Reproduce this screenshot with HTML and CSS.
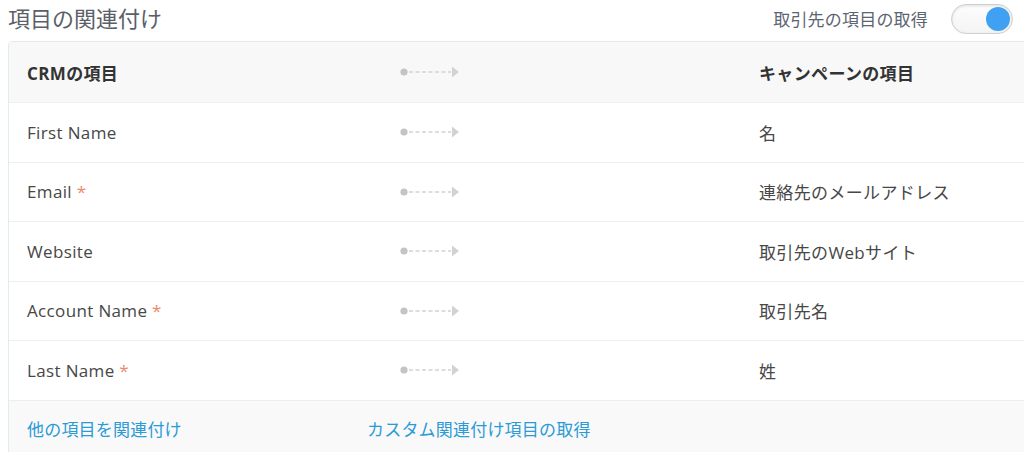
FILE: index.html
```html
<!DOCTYPE html>
<html lang="ja">
<head>
<meta charset="utf-8">
<link rel="stylesheet" href="styles.css">
</head>
<body>
<div class="page">
  <div class="topbar">
    <h1 class="title">項目の関連付け</h1>
    <div class="fetch">
      <span class="fetch-label">取引先の項目の取得</span>
      <span class="toggle"><span class="knob"></span></span>
    </div>
  </div>
  <div class="card">
    <div class="row head">
      <div class="cell">CRMの項目</div>
      <div class="cell arrow-cell"><svg class="arrow" width="62" height="14" viewBox="0 0 62 14"><circle cx="5" cy="7" r="3.6" fill="#c4c4c4"/><path d="M10 7H52" stroke="#d2d2d2" stroke-width="1.4" stroke-dasharray="4 2.5"/><path d="M53 1.5L60 7L53 12.5Z" fill="#d2d2d2"/></svg></div>
      <div class="cell">キャンペーンの項目</div>
    </div>
    <div class="row">
      <div class="cell">First Name</div>
      <div class="cell arrow-cell"><svg class="arrow" width="62" height="14" viewBox="0 0 62 14"><circle cx="5" cy="7" r="3.6" fill="#c4c4c4"/><path d="M10 7H52" stroke="#d2d2d2" stroke-width="1.4" stroke-dasharray="4 2.5"/><path d="M53 1.5L60 7L53 12.5Z" fill="#d2d2d2"/></svg></div>
      <div class="cell">名</div>
    </div>
    <div class="row">
      <div class="cell">Email <span class="req">*</span></div>
      <div class="cell arrow-cell"><svg class="arrow" width="62" height="14" viewBox="0 0 62 14"><circle cx="5" cy="7" r="3.6" fill="#c4c4c4"/><path d="M10 7H52" stroke="#d2d2d2" stroke-width="1.4" stroke-dasharray="4 2.5"/><path d="M53 1.5L60 7L53 12.5Z" fill="#d2d2d2"/></svg></div>
      <div class="cell">連絡先のメールアドレス</div>
    </div>
    <div class="row">
      <div class="cell">Website</div>
      <div class="cell arrow-cell"><svg class="arrow" width="62" height="14" viewBox="0 0 62 14"><circle cx="5" cy="7" r="3.6" fill="#c4c4c4"/><path d="M10 7H52" stroke="#d2d2d2" stroke-width="1.4" stroke-dasharray="4 2.5"/><path d="M53 1.5L60 7L53 12.5Z" fill="#d2d2d2"/></svg></div>
      <div class="cell">取引先のWebサイト</div>
    </div>
    <div class="row">
      <div class="cell">Account Name <span class="req">*</span></div>
      <div class="cell arrow-cell"><svg class="arrow" width="62" height="14" viewBox="0 0 62 14"><circle cx="5" cy="7" r="3.6" fill="#c4c4c4"/><path d="M10 7H52" stroke="#d2d2d2" stroke-width="1.4" stroke-dasharray="4 2.5"/><path d="M53 1.5L60 7L53 12.5Z" fill="#d2d2d2"/></svg></div>
      <div class="cell">取引先名</div>
    </div>
    <div class="row">
      <div class="cell">Last Name <span class="req">*</span></div>
      <div class="cell arrow-cell"><svg class="arrow" width="62" height="14" viewBox="0 0 62 14"><circle cx="5" cy="7" r="3.6" fill="#c4c4c4"/><path d="M10 7H52" stroke="#d2d2d2" stroke-width="1.4" stroke-dasharray="4 2.5"/><path d="M53 1.5L60 7L53 12.5Z" fill="#d2d2d2"/></svg></div>
      <div class="cell">姓</div>
    </div>
    <div class="footer">
      <a class="link" href="#">他の項目を関連付け</a>
      <a class="link" href="#">カスタム関連付け項目の取得</a>
    </div>
  </div>
</div>
</body>
</html>
```
FILE: styles.css
```css
html, body {
  margin: 0;
  padding: 0;
  background: #ffffff;
  overflow: hidden;
}
body {
  font-family: "Open Sans", "Noto Sans CJK JP", sans-serif;
  color: #474747;
  width: 1024px;
  height: 452px;
}
.page {
  padding-left: 8px;
}
.topbar {
  height: 41px;
  display: flex;
  align-items: center;
  justify-content: space-between;
  padding-right: 11px;
}
.title {
  margin: 0;
  font-family: "Noto Sans CJK JP", sans-serif;
  font-size: 22px;
  font-weight: 400;
  color: #5b6068;
  line-height: 1;
  margin-top: -8px;
}
.fetch {
  display: flex;
  align-items: center;
  gap: 23px;
  margin-top: -4px;
}
.fetch-label {
  font-family: "Noto Sans CJK JP", sans-serif;
  font-size: 17px;
  letter-spacing: 0.2px;
  color: #5d6571;
}
.toggle {
  width: 58px;
  height: 28px;
  border: 1px solid #cfcfcf;
  border-radius: 16px;
  background: linear-gradient(#fdfdfd, #f4f4f4);
  box-shadow: inset 0 1px 3px rgba(0,0,0,0.12);
  display: flex;
  align-items: center;
  justify-content: flex-end;
  padding-right: 2px;
}
.knob {
  width: 24px;
  height: 24px;
  border-radius: 50%;
  background: #40a0f1;
}
.card {
  width: 1040px;
  border: 1px solid #e3ebf2;
  border-radius: 4px;
  overflow: hidden;
  background: #fff;
}
.row {
  display: grid;
  grid-template-columns: 373px 359px 1fr;
  height: 58.5px;
  align-items: center;
  padding-left: 18px;
  border-bottom: 1px solid #e8f0f5;
  font-size: 17px;
  letter-spacing: 0.35px;
}
.row.head {
  background: #f8f8f8;
  font-weight: 700;
  color: #333;
  height: 60px;
}
.cell {
  white-space: nowrap;
}
.arrow-cell {
  display: flex;
  align-items: center;
}
.arrow {
  display: block;
  margin-left: -1px;
}
.req {
  color: #ec8a6c;
}
.footer {
  background: #f9f9f9;
  height: 60px;
  display: grid;
  grid-template-columns: 340px auto;
  align-items: center;
  padding-left: 18px;
  padding-bottom: 4px;
  box-sizing: border-box;
}
.link {
  font-family: "Noto Sans CJK JP", sans-serif;
  font-size: 17px;
  letter-spacing: 0.2px;
  color: #2a9bd6;
  text-decoration: none;
  justify-self: start;
}
```
